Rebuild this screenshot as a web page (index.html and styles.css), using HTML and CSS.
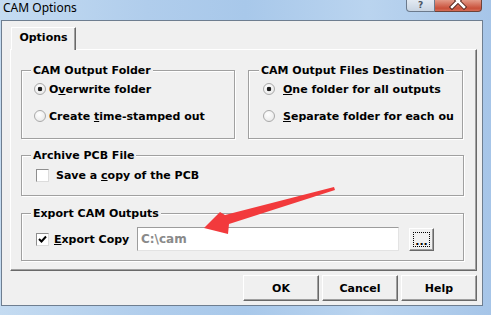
FILE: index.html
```html
<!DOCTYPE html>
<html lang="en">
<head>
  <meta charset="UTF-8" />
  <title>CAM Options</title>
  <link rel="stylesheet" href="styles.css">
</head>
<body>

  <div class="titlebar">
    <span class="title">CAM Options</span>
    <div class="caption-btns">
      <span class="cbtn help-btn">?</span>
      <span class="cbtn close-btn">
        <svg width="46" height="11" viewBox="0 0 46 11">
          <path d="M17 -5 L29 7 M29 -5 L17 7" stroke="#5a2a22" stroke-width="4.5" stroke-linecap="square" />
          <path d="M17 -5 L29 7 M29 -5 L17 7" stroke="#fff" stroke-width="2.5" stroke-linecap="square" />
        </svg>
      </span>
    </div>
  </div>

  <div class="client">
    <div class="tabs">
      <div class="tab">Options</div>
    </div>

    <div class="panel">
      <div class="row-two">
        <div class="group g-top">
          <div class="group-title">CAM Output Folder</div>
          <div class="opt"><span class="radio on"></span><span class="opt-text">O<u>v</u>erwrite folder</span></div>
          <div class="opt"><span class="radio"></span><span class="opt-text">Create <u>t</u>ime-stamped out</span></div>
        </div>
        <div class="group g-top g-dest">
          <div class="group-title">CAM Output Files Destination</div>
          <div class="opt"><span class="radio on"></span><span class="opt-text"><u>O</u>ne folder for all outputs</span></div>
          <div class="opt"><span class="radio"></span><span class="opt-text"><u>S</u>eparate folder for each ou</span></div>
        </div>
      </div>

      <div class="group g-archive">
        <div class="group-title">Archive PCB File</div>
        <div class="opt"><span class="check"></span><span class="opt-text">Save a <u>c</u>opy of the PCB</span></div>
      </div>

      <div class="group g-export">
        <div class="group-title">Export CAM Outputs</div>
        <div class="export-row">
          <span class="check">
            <svg width="11" height="11" viewBox="0 0 11 11">
              <path d="M2 5 L4.5 7.5 L9 2.5" fill="none" stroke="#000" stroke-width="2" />
            </svg>
          </span>
          <span class="opt-text export-label"><u>E</u>xport Copy</span>
          <div class="path">C:\cam</div>
          <button class="browse"><span class="focus">...</span></button>
        </div>
      </div>
    </div>

    <div class="actions">
      <button class="btn">OK</button>
      <button class="btn">Cancel</button>
      <button class="btn">Help</button>
    </div>
  </div>

  <svg class="arrow" width="491" height="315" viewBox="0 0 491 315">
    <polygon points="204,228 220,212 225,215 334,187 335,190 229,224 228,234" fill="#f23a3c" />
  </svg>

</body>
</html>
```

FILE: styles.css
```css
body {
  margin: 0;
  width: 491px;
  height: 315px;
  overflow: hidden;
  position: relative;
  background: linear-gradient(90deg, #c4dbf1 0%, #b0cdec 30%, #a8c8ea 50%, #bad4ef 75%, #a6c5e8 100%);
  font-family: "DejaVu Sans", sans-serif;
  font-size: 11px;
  font-weight: bold;
  color: #000;
}
.titlebar {
  height: 20px;
  display: flex;
  padding: 0 9px 0 3px;
}
.title {
  font-family: "Noto Sans", sans-serif;
  font-weight: normal;
  font-size: 12px;
  line-height: 16px;
}
.caption-btns {
  margin-left: auto;
  display: flex;
  align-self: flex-start;
}
.cbtn {
  height: 12px;
  box-sizing: border-box;
  border: 1px solid #6b7a8c;
  border-top: none;
  overflow: hidden;
}
.help-btn {
  width: 29px;
  border-radius: 0 0 0 4px;
  background: linear-gradient(#e3eaf2, #c8d4e2);
  color: #4a5563;
  font-size: 9px;
  line-height: 11px;
  text-align: center;
}
.close-btn {
  width: 47px;
  border-left: none;
  border-color: #6e4238;
  border-radius: 0 0 4px 0;
  background: linear-gradient(#e39a88, #c9503a 75%, #d46d57);
}
.close-btn svg {
  display: block;
}
.client {
  box-sizing: border-box;
  margin-left: 1px;
  width: 482px;
  height: 286px;
  border: 1px solid #6e7e90;
  background: #f0f0f0;
}
.tabs {
  display: flex;
  padding: 6px 0 0 9px;
}
.tab {
  position: relative;
  z-index: 1;
  width: 65px;
  height: 23px;
  box-sizing: border-box;
  margin-bottom: -1px;
  border-top: 1px solid #fff;
  border-left: 1px solid #fff;
  border-right: 1px solid #696969;
  box-shadow: inset -1px 0 #a0a0a0;
  background: #f0f0f0;
  text-align: center;
  line-height: 20px;
}
.panel {
  box-sizing: border-box;
  margin-left: 8px;
  width: 467px;
  height: 222px;
  border-top: 1px solid #fff;
  border-left: 1px solid #fff;
  border-right: 1px solid #696969;
  border-bottom: 1px solid #696969;
  box-shadow: inset -1px -1px #a0a0a0;
  padding: 20px 12px 0 10px;
}
.row-two {
  display: grid;
  grid-template-columns: 214px 215px;
  column-gap: 13px;
}
.group {
  box-sizing: border-box;
  border: 1px solid #a0a0a0;
  box-shadow: 1px 1px 0 #fff, inset 1px 1px 0 #fff;
  padding-left: 13px;
}
.group-title {
  display: table;
  margin: -7px 0 0 -4px;
  padding: 0 2px;
  background: #f0f0f0;
  line-height: 13px;
  white-space: nowrap;
}
.g-top {
  height: 69px;
}
.g-dest .group-title {
  margin-left: -3px;
}
.opt {
  display: flex;
  align-items: center;
  height: 20px;
  margin-top: 2px;
  white-space: nowrap;
}
.opt + .opt {
  margin-top: 7px;
}
.radio {
  flex: none;
  width: 12px;
  height: 12px;
  box-sizing: border-box;
  margin-left: -1px;
  border-radius: 50%;
  border: 1px solid #a9a9a9;
  background: radial-gradient(circle at 40% 35%, #fff, #e4e4e4);
}
.radio.on {
  background: radial-gradient(circle, #1c1c1c 2px, transparent 2.6px), radial-gradient(circle at 40% 35%, #fff, #e4e4e4);
}
.radio + .opt-text {
  margin-left: 3px;
}
.g-dest .radio {
  margin-left: 1px;
}
.g-dest .radio + .opt-text {
  margin-left: 8px;
}
.check {
  flex: none;
  width: 13px;
  height: 13px;
  box-sizing: border-box;
  margin-left: 1px;
  border: 1px solid;
  border-color: #8e8e8e #dcdcdc #dcdcdc #8e8e8e;
  background: #fff;
}
.check svg {
  display: block;
}
.check + .opt-text {
  margin-left: 7px;
}
.g-archive {
  margin-top: 16px;
  height: 41px;
}
.g-archive .opt {
  margin-top: 3px;
}
.g-export {
  margin-top: 17px;
  height: 48px;
}
.export-row {
  display: flex;
  align-items: center;
  height: 24px;
  margin-top: 7px;
}
.check + .export-label {
  margin-left: 5px;
  width: 78px;
  white-space: nowrap;
}
.path {
  box-sizing: border-box;
  width: 262px;
  height: 24px;
  margin-left: 5px;
  border: 1px solid;
  border-color: #9c9c9c #e3e3e3 #e3e3e3 #9c9c9c;
  background: #fff;
  color: #8a8a8a;
  padding-left: 3px;
  font-size: 12px;
  line-height: 22px;
}
.browse {
  box-sizing: border-box;
  width: 25px;
  height: 23px;
  margin-left: 10px;
  padding: 3px;
  border: 1px solid;
  border-color: #fff #696969 #696969 #fff;
  box-shadow: inset -1px -1px #a0a0a0;
  background: #f0f0f0;
  font: inherit;
  color: #000;
}
.focus {
  display: block;
  height: 100%;
  box-sizing: border-box;
  border: 1px dotted #000;
  line-height: 18px;
  text-align: center;
}
.actions {
  display: flex;
  justify-content: flex-end;
  gap: 3px;
  padding: 4px 5px 0 0;
}
.btn {
  box-sizing: border-box;
  width: 76px;
  height: 26px;
  padding: 0;
  border: 1px solid;
  border-color: #fff #696969 #696969 #fff;
  box-shadow: inset -1px -1px #a0a0a0;
  background: #f0f0f0;
  font: inherit;
  color: #000;
}
.arrow {
  position: absolute;
  left: 0;
  top: 0;
  pointer-events: none;
}
```
